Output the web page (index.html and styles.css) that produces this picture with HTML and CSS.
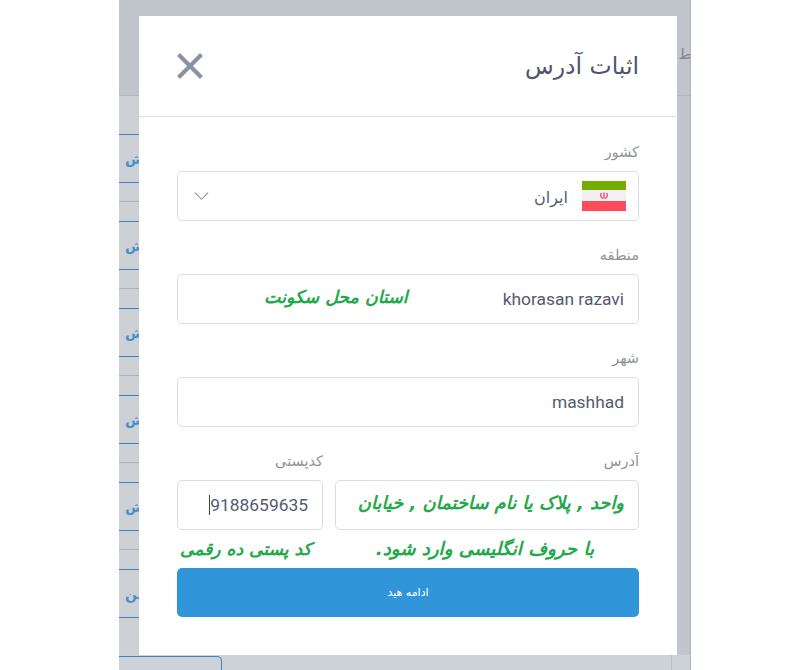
FILE: index.html
```html
<!DOCTYPE html>
<html lang="fa">
<head>
<meta charset="utf-8">
<title>اثبات آدرس</title>
<link rel="stylesheet" href="styles.css">
</head>
<body>
<div class="stage">
  <div class="topbar"><span class="peek">ط</span></div>
  <div class="rows">
    <div class="row"><div class="cell"><span>ویرایش</span></div></div>
    <div class="row"><div class="cell"><span>ویرایش</span></div></div>
    <div class="row"><div class="cell"><span>ویرایش</span></div></div>
    <div class="row"><div class="cell"><span>ویرایش</span></div></div>
    <div class="row"><div class="cell"><span>ویرایش</span></div></div>
    <div class="row"><div class="cell"><span class="last">گرفتن</span></div></div>
  </div>
  <div class="footer-tab"></div>
  <div class="footer-line"></div>
  <div class="modal" dir="rtl">
    <header class="modal-head">
      <h1 class="title">اثبات آدرس</h1>
      <svg class="close" viewBox="0 0 28 28" aria-hidden="true"><path d="M2.500 2.500 25.500 25.500M25.500 2.500 2.500 25.500"/></svg>
    </header>
    <div class="modal-body">
      <div class="field">
        <label class="label">کشور</label>
        <div class="box select">
          <svg class="flag" viewBox="0 0 44 30" aria-hidden="true">
            <rect width="44" height="9" fill="#74ac00"/>
            <rect y="9" width="44" height="11" fill="#f1f1f3"/>
            <rect y="20" width="44" height="10" fill="#ff4b5c"/>
            <path d="M19.500 12c-1.500 2-1 4.500 1.500 5.500M24.500 12c1.500 2 1 4.500-1.500 5.500M22 11.500v6" fill="none" stroke="#f0607a" stroke-width="1.500"/>
          </svg>
          <span class="value persian">ایران</span>
          <svg class="chevron" viewBox="0 0 16 10" aria-hidden="true"><path d="M1 1.500 8 8.500 15 1.500"/></svg>
        </div>
      </div>
      <div class="field">
        <label class="label">منطقه</label>
        <div class="box">
          <span class="value latin" dir="ltr">khorasan razavi</span>
          <span class="hint hint-region">استان محل سکونت</span>
        </div>
      </div>
      <div class="field">
        <label class="label">شهر</label>
        <div class="box"><span class="value latin" dir="ltr">mashhad</span></div>
      </div>
      <div class="pair">
        <div class="field address">
          <label class="label">آدرس</label>
          <div class="box"><span class="hint hint-address">واحد , پلاک یا نام ساختمان , خیابان</span></div>
        </div>
        <div class="field postal">
          <label class="label">کدپستی</label>
          <div class="box"><span class="value latin" dir="ltr"><span class="caret"></span>9188659635</span></div>
        </div>
      </div>
      <div class="notes">
        <span class="hint note-address">با حروف انگلیسی وارد شود.</span>
        <span class="hint note-postal">کد پستی ده رقمی</span>
      </div>
      <button class="submit" type="button">ادامه هید</button>
    </div>
  </div>
</div>
</body>
</html>
```

FILE: styles.css
```css
* { box-sizing: border-box; }
html, body { margin: 0; height: 670px; background: #fff; overflow: hidden; }
body { padding-left: 119px; font-family: "DejaVu Sans", sans-serif; }

.stage {
  position: relative;
  width: 572px;
  height: 670px;
  overflow: hidden;
  background: #cdd1d8;
  border-right: 1px solid #aeb3bb;
}
.topbar {
  height: 96px;
  background: #bfc5ca;
  border-bottom: 1px solid #b4b9be;
  display: flex;
  justify-content: flex-end;
  padding: 44px 0 0;
}
.peek { font-size: 15px; line-height: 20px; color: #7f858d; margin-right: -2px; }

.rows {
  height: 559px;
  padding-top: 38px;
  background: linear-gradient(to right, #cdd1d6 558px, #c1c5cc 558px);
}
.row { height: 87px; position: relative; }
.cell {
  height: 49px;
  border-top: 1px solid #3d83c0;
  border-bottom: 1px solid #3d83c0;
  width: 60px;
  padding: 14px 0 0 6px;
  white-space: nowrap;
}
.row + .row::before {
  content: "";
  position: absolute;
  top: -20px;
  left: 0;
  width: 20px;
  height: 1px;
  background: #aeb2b7;
}
.cell span {
  display: inline-block;
  font-size: 14px;
  font-weight: 700;
  line-height: 20px;
  color: #4490cc;
}
.footer-tab {
  position: absolute;
  left: 0;
  top: 656px;
  width: 103px;
  height: 20px;
  border-top: 1px solid #3d83c0;
  border-right: 1px solid #3d83c0;
  border-top-right-radius: 5px;
}
.footer-line {
  position: absolute;
  left: 552px;
  top: 655px;
  width: 1px;
  height: 15px;
  background: #babec6;
}

.modal {
  position: absolute;
  left: 20px;
  top: 16px;
  width: 538px;
  height: 639px;
  background: #fff;
}
.modal-head {
  height: 101px;
  margin-right: -2px;
  border-bottom: 1px solid #dcdfe6;
  padding: 0 40px 0 38px;
  display: flex;
  align-items: center;
  justify-content: space-between;
}
.title {
  margin: 0;
  font-size: 23.500px;
  font-weight: 400;
  line-height: 30px;
  color: #4f556c;
}
.close { width: 28px; height: 28px; margin-left: -1px; }
.close path { fill: none; stroke: #8a93a1; stroke-width: 4.200px; }

.modal-body { padding: 1px 38px 0; }
.label {
  display: block;
  padding: 24px 0 9px;
  font-size: 14.500px;
  line-height: 20px;
  color: #8f9399;
}
.box {
  height: 50px;
  border: 1px solid #dcdde3;
  border-radius: 5px;
  display: flex;
  align-items: center;
  padding: 0 14px;
  background: #fff;
}
.value { color: #555a70; font-size: 17.400px; line-height: 24px; }
.latin { font-family: Roboto, sans-serif; }
.persian { font-size: 16px; margin-top: 4px; }
.select .flag { width: 44px; height: 30px; margin-left: 14px; margin-right: -2px; }
.select .chevron { width: 15px; height: 10px; margin-right: auto; margin-left: 2px; }
.chevron path { fill: none; stroke: #8f939a; stroke-width: 1.200px; }
.hint {
  color: #23a94a;
  font-style: italic;
  font-weight: 700;
  font-size: 17.400px;
  line-height: 24px;
  white-space: nowrap;
}
.hint-region { margin: 0 95px 4px 0; }
.hint-address { font-size: 17.900px; margin-bottom: 5px; }
.note-address { font-size: 18.200px; }
.note-postal { font-size: 17.100px; }

.pair { display: flex; gap: 12px; }
.address { width: 304px; }
.postal { width: 146px; }
.caret {
  display: inline-block;
  width: 1px;
  height: 20px;
  background: #444;
  vertical-align: -4px;
}

.notes {
  height: 38px;
  display: flex;
  align-items: center;
  padding: 0 45px 0 3px;
  justify-content: space-between;
}
.submit {
  display: block;
  width: 100%;
  height: 49px;
  border: 0;
  border-radius: 5px;
  background: #3196d9;
  color: #fff;
  font: 400 11px/16px "DejaVu Sans", sans-serif;
}
```
